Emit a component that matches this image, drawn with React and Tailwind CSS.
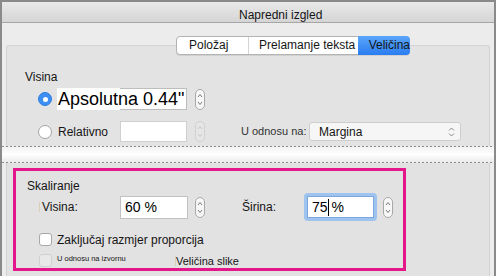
function Stepper({ disabled, className = '' }) {
  const c = disabled ? '#c4c4c4' : '#7a7a7a'
  return (
    <svg className={className} viewBox="0 0 10 21" width="10" height="21">
      <rect x="0.5" y="0.5" width="9" height="20" rx="4.5" fill={disabled ? '#e6e6e6' : '#f7f7f7'} stroke={disabled ? '#cfcfcf' : '#a8a8a8'} />
      <path d="M3 8 L5 5.5 L7 8" fill="none" stroke={c} strokeWidth="1" />
      <path d="M3 13 L5 15.5 L7 13" fill="none" stroke={c} strokeWidth="1" />
    </svg>
  )
}

export default function App() {
  return (
    <div className="w-[496px] h-[276px] overflow-hidden bg-[#ececec] border-l-2 border-t-2 border-r-2 border-[#8a8a8a] flex flex-col font-['Liberation_Sans',Arial,sans-serif] text-[#151515]">
      {/* title bar */}
      <div className="h-[21px] shrink-0 border-b border-[#a6a6a6] bg-linear-to-b from-[#e9e9e9] to-[#d5d5d5] pl-[237px] pt-[6px] text-[12px] leading-[14px]">
        Napredni izgled
      </div>

      {/* tabs */}
      <div className="relative z-10 mt-[13px] ml-[174px] flex h-[19px] w-[234px] rounded-[4px] border border-[#b3b3b3] bg-white text-[12px] leading-[17px] shadow-[0_1px_0_#d0d0d0]">
        <div className="w-[73px] pl-[12px] border-r border-[#d4d4d4]">Položaj</div>
        <div className="w-[110px] pl-[10px]">Prelamanje teksta</div>
        <div className="flex-1 -my-px -mr-px rounded-r-[4px] bg-linear-to-b from-[#5ba6fb] to-[#2a7cf0] pl-[11px] pt-px whitespace-nowrap">Veličina</div>
      </div>

      {/* upper panel */}
      <div className="-mt-[10px] mx-[4px] h-[101px] shrink-0 rounded-t-[3px] border border-b-0 border-[#d3d3d3] bg-[#e3e3e3]">
        <div className="mt-[24px] pl-[18px] text-[12px] leading-[14px]">Visina</div>

        <div className="mt-[4px] flex h-[22px] items-center pl-[31px]">
          <div className="flex h-[14px] w-[14px] items-center justify-center rounded-full border border-[#2f7de0] bg-[#3d8ff3]">
            <div className="h-[5px] w-[5px] rounded-full bg-white" />
          </div>
          <div className="relative ml-[5px] flex h-[22px] w-[130px]">
            <div className="w-[63px] bg-white" />
            <div className="flex-1 border border-l-0 border-[#bdbdbd] bg-white" />
            <div className="absolute inset-0 pl-[1px] text-[18px] leading-[22px] text-black whitespace-nowrap">Apsolutna 0.44"</div>
          </div>
          <Stepper className="ml-[8px]" />
        </div>

        <div className="mt-[11px] flex h-[21px] items-center pl-[31px]">
          <div className="h-[14px] w-[14px] rounded-full border border-[#a4a4a4] bg-white" />
          <div className="ml-[6px] w-[62px] text-[12px]">Relativno</div>
          <div className="h-[21px] w-[67px] border border-[#d0d0d0] bg-white" />
          <Stepper disabled className="ml-[8px]" />
          <div className="ml-[36px] w-[68px] text-[11px] text-[#333]">U odnosu na:</div>
          <div className="flex h-[19px] w-[152px] items-center justify-between rounded-[3px] border border-[#cdcdcd] bg-[#f6f6f6] pl-[9px] pr-[5px] text-[12px]">
            <span>Margina</span>
            <svg width="7" height="12" viewBox="0 0 7 12">
              <path d="M1 4.5 L3.5 2 L6 4.5" fill="none" stroke="#8a8a8a" strokeWidth="1" />
              <path d="M1 7.5 L3.5 10 L6 7.5" fill="none" stroke="#8a8a8a" strokeWidth="1" />
            </svg>
          </div>
        </div>
      </div>

      {/* dashed break */}
      <div className="h-px shrink-0 bg-[repeating-linear-gradient(90deg,#8c8c8c_0_2px,transparent_2px_4px)]" />
      <div className="h-[15px] shrink-0 bg-linear-to-b from-[#f3f3f3] via-white to-[#ebebeb]" />
      <div className="h-px shrink-0 bg-[repeating-linear-gradient(90deg,#8c8c8c_0_2px,transparent_2px_4px)]" />

      {/* lower panel */}
      <div className="mx-[4px] flex-1 border-x border-[#d3d3d3] bg-[#e2e2e2] pt-[5px] pl-[6px]">
        <div className="h-[103px] w-[393px] border-[3px] border-[#e5168a]">
          <div className="pl-[11px] pt-[8px] text-[12px] leading-[14px]">Skaliranje</div>

          <div className="flex h-[28px] items-center">
            <div className="ml-[23px] h-[10px] w-px bg-[#d9cfb8]" />
            <div className="ml-[2px] w-[78px] text-[12px]">Visina:</div>
            <div className="flex h-[23px] w-[68px] items-center border border-[#c2c2c2] bg-white pl-[4px] text-[14px] text-black">60 %</div>
            <Stepper className="ml-[7px]" />
            <div className="ml-[37px] w-[62px] text-[12px]">Širina:</div>
            <div className="h-[28px] w-[73px] rounded-[4px] bg-[#9ec3ef] p-[3px]">
              <div className="flex h-[22px] items-center border border-[#7ea8dd] bg-white pl-[4px] text-[14px] text-black">
                <span>75</span>
                <span className="h-[17px] w-px bg-black" />
                <span className="ml-[3px]">%</span>
              </div>
            </div>
            <Stepper className="ml-[6px]" />
          </div>

          <div className="mt-[12px] flex h-[13px] items-center">
            <div className="ml-[23px] h-[13px] w-[13px] rounded-[3px] border border-[#a8a8a8] bg-white" />
            <div className="ml-[5px] text-[12px] whitespace-nowrap">Zaključaj razmjer proporcija</div>
          </div>

          <div className="mt-[8px] flex h-[13px] items-center">
            <div className="ml-[23px] h-[13px] w-[13px] rounded-[3px] border border-[#d0d0d0] bg-[#e8e8e8]" />
            <div className="ml-[5px] w-[118px] text-[7.5px] leading-[8px] -mt-[3px] whitespace-nowrap">U odnosu na izvornu</div>
            <div className="h-[10px] w-px bg-[#d9cfb8]" />
            <div className="text-[11px] leading-[13px] mt-[2px]">Veličina slike</div>
          </div>
        </div>
      </div>
    </div>
  )
}
